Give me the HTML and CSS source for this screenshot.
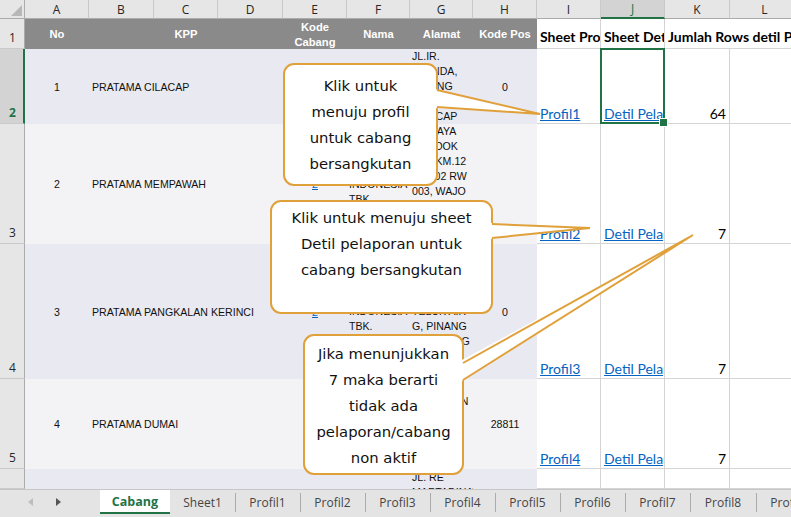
FILE: index.html
```html
<!DOCTYPE html>
<html lang="id">
<head>
<meta charset="utf-8">
<title>Cabang</title>
<link rel="stylesheet" href="styles.css">
</head>
<body>
<div class="app">
  <div class="sheet">
    <!-- column letters -->
    <div class="corner"><svg width="24" height="18" viewBox="0 0 24 18"><polygon points="11,16 22,16 22,5" fill="#b7b7b7"/></svg></div>
    <div class="ch">A</div>
    <div class="ch">B</div>
    <div class="ch">C</div>
    <div class="ch">D</div>
    <div class="ch">E</div>
    <div class="ch">F</div>
    <div class="ch">G</div>
    <div class="ch">H</div>
    <div class="ch">I</div>
    <div class="ch sel">J</div>
    <div class="ch">K</div>
    <div class="ch">L</div>

    <!-- row 1 -->
    <div class="rh">1</div>
    <div class="th">No</div>
    <div class="th span3">KPP</div>
    <div class="th two">Kode<br>Cabang</div>
    <div class="th">Nama</div>
    <div class="th">Alamat</div>
    <div class="th">Kode Pos</div>
    <div class="hd">Sheet Profil</div>
    <div class="hd">Sheet Detil Pelaporan</div>
    <div class="hd over">Jumlah Rows detil Pelaporan</div>
    <div class="hd last"></div>

    <!-- row 2 -->
    <div class="rh sel">2</div>
    <div class="td b1 num">1</div>
    <div class="td b1 kpp span3">PRATAMA CILACAP</div>
    <div class="td b1 num"><span class="lk">1</span></div>
    <div class="td b1 txt"><div>PT BANK</div><div>INDONESIA</div><div>TBK.</div></div>
    <div class="td b1 txt"><div>JL.IR.</div><div>JUANDA,</div><div>SIDANG</div><div>NO.1</div><div>CILACAP</div></div>
    <div class="td b1 num">0</div>
    <div class="cell"><span class="hl">Profil1</span></div>
    <div class="cell selcell"><span class="clip"><span class="hl">Detil Pelaporan</span></span></div>
    <div class="cell numr">64</div>
    <div class="cell"></div>

    <!-- row 3 -->
    <div class="rh">3</div>
    <div class="td b2 num">2</div>
    <div class="td b2 kpp span3">PRATAMA MEMPAWAH</div>
    <div class="td b2 num"><span class="lk">2</span></div>
    <div class="td b2 txt"><div>PT BANK</div><div>INDONESIA</div><div>TBK.</div></div>
    <div class="td b2 txt"><div>JL. RAYA</div><div>PONDOK</div><div>PTK KM.12</div><div>RT 002 RW</div><div>003, WAJO</div><div>HILIR</div><div>MEMPAWAH</div><div>&nbsp;</div></div>
    <div class="td b2 num"></div>
    <div class="cell"><span class="hl">Profil2</span></div>
    <div class="cell"><span class="clip"><span class="hl">Detil Pelaporan</span></span></div>
    <div class="cell numr">7</div>
    <div class="cell"></div>

    <!-- row 4 -->
    <div class="rh">4</div>
    <div class="td b1 num">3</div>
    <div class="td b1 kpp span3">PRATAMA PANGKALAN KERINCI</div>
    <div class="td b1 num"><span class="lk">2</span></div>
    <div class="td b1 txt"><div>PT BANK</div><div>INDONESIA</div><div>TBK.</div></div>
    <div class="td b1 txt"><div>JL. LINTAS</div><div>TIMUR KM.</div><div>PANGKALAN</div><div>KERINCI</div><div>TELUK AIR</div><div>G, PINANG</div><div>SELERANG</div><div>RIAU</div><div>&nbsp;</div></div>
    <div class="td b1 num">0</div>
    <div class="cell"><span class="hl">Profil3</span></div>
    <div class="cell"><span class="clip"><span class="hl">Detil Pelaporan</span></span></div>
    <div class="cell numr">7</div>
    <div class="cell"></div>

    <!-- row 5 -->
    <div class="rh">5</div>
    <div class="td b2 num">4</div>
    <div class="td b2 kpp span3">PRATAMA DUMAI</div>
    <div class="td b2 num"><span class="lk">1</span></div>
    <div class="td b2 txt"><div>PT BANK</div><div>INDONESIA</div><div>TBK.</div></div>
    <div class="td b2 txt"><div>JL. JEND.</div><div>SUDIRMAN</div><div>NO. 8</div><div>DUMAI</div><div>RIAU</div><div>&nbsp;</div></div>
    <div class="td b2 num">28811</div>
    <div class="cell"><span class="hl">Profil4</span></div>
    <div class="cell"><span class="clip"><span class="hl">Detil Pelaporan</span></span></div>
    <div class="cell numr">7</div>
    <div class="cell"></div>

    <!-- row 6 -->
    <div class="rh"></div>
    <div class="td b1"></div>
    <div class="td b1 span3"></div>
    <div class="td b1"></div>
    <div class="td b1"></div>
    <div class="td b1 txt top"><div>JL. RE</div><div>MARTADINATA</div></div>
    <div class="td b1"></div>
    <div class="cell"></div>
    <div class="cell"></div>
    <div class="cell"></div>
    <div class="cell"></div>
  </div>

  <div class="tabs">
    <div class="nav">
      <svg width="5" height="8" viewBox="0 0 5 8"><polygon points="5,0 5,8 0,4" fill="#bdbdbd"/></svg>
      <svg width="5" height="8" viewBox="0 0 5 8"><polygon points="0,0 0,8 5,4" fill="#555"/></svg>
    </div>
    <div class="tab active">Cabang</div>
    <div class="tab">Sheet1</div>
    <div class="tab sep">Profil1</div>
    <div class="tab sep">Profil2</div>
    <div class="tab sep">Profil3</div>
    <div class="tab sep">Profil4</div>
    <div class="tab sep">Profil5</div>
    <div class="tab sep">Profil6</div>
    <div class="tab sep">Profil7</div>
    <div class="tab sep wide">Profil8</div>
    <div class="tab sep">Profil9</div>
  </div>

  <div class="callout c1">Klik untuk<br>menuju profil<br>untuk cabang<br>bersangkutan</div>
  <div class="callout c2">Klik untuk menuju sheet<br>Detil pelaporan untuk<br>cabang bersangkutan</div>
  <div class="callout c3">Jika menunjukkan<br>7 maka berarti<br>tidak ada<br>pelaporan/cabang<br>non aktif</div>

  <svg class="tails" width="791" height="517" viewBox="0 0 791 517">
    <polygon points="434,89 540,114 434,108" fill="#fff"/>
    <polyline points="437,90 540,114 437,107" fill="none" stroke="#e0a03a" stroke-width="2"/>
    <polygon points="489,223 590,228 489,239" fill="#fff"/>
    <polyline points="492,224 590,228 492,238" fill="none" stroke="#e0a03a" stroke-width="2"/>
    <polygon points="460,361 693,235 460,382" fill="#fff"/>
    <polyline points="463,363 693,235 463,380" fill="none" stroke="#e0a03a" stroke-width="2"/>
  </svg>
</div>
</body>
</html>
```

FILE: styles.css
```css
* { box-sizing: border-box; margin: 0; padding: 0; }
html, body { width: 791px; height: 517px; overflow: hidden; background: #fff; }
body { font-family: "Liberation Sans", Arial, sans-serif; }

.app {
  position: relative;
  width: 791px;
  height: 517px;
  display: flex;
  flex-direction: column;
  overflow: hidden;
}

.sheet {
  flex: 0 0 489px;
  width: 791px;
  display: grid;
  grid-template-columns: 25px 64px 65px 64px 65px 64px 63px 63px 64px 64px 64px 65px 70px;
  grid-template-rows: 19px 30px 75px 120px 135px 90px 20px;
  overflow: hidden;
  background: #fff;
}

/* column letters */
.corner {
  background: #e6e6e6;
  border-right: 1px solid #ababab;
  border-bottom: 1px solid #ababab;
}
.corner svg { display: block; }
.ch {
  background: #e6e6e6;
  border-right: 1px solid #c9c9c9;
  border-bottom: 1px solid #ababab;
  display: flex;
  align-items: center;
  justify-content: center;
  font-family: "Open Sans", sans-serif;
  font-size: 12px;
  color: #262626;
}
.ch.sel {
  background: #d3d3d3;
  color: #217346;
  border-bottom: 2px solid #217346;
}

/* row numbers */
.rh {
  background: #e6e6e6;
  border-right: 1px solid #ababab;
  border-bottom: 1px solid #c9c9c9;
  display: flex;
  align-items: flex-end;
  padding: 0 0 2px 9px;
  font-family: "Open Sans", sans-serif;
  font-size: 12px;
  color: #262626;
}
.rh.sel {
  background: #d3d3d3;
  color: #217346;
  font-weight: 700;
  border-right: 2px solid #217346;
}

/* table header */
.th {
  background: #8a8a8a;
  color: #fff;
  font-weight: 700;
  font-size: 11.2px;
  line-height: 14px;
  text-align: center;
  display: flex;
  align-items: center;
  justify-content: center;
}
.th.two { padding-top: 2px; line-height: 15px; }
.span3 { grid-column: span 3; }

.hd {
  background: #fff;
  border-right: 1px solid #d4d4d4;
  border-bottom: 1px solid #d4d4d4;
  display: flex;
  align-items: flex-end;
  padding: 0 0 3px 3px;
  font-family: Lato, "Open Sans", sans-serif;
  font-weight: 700;
  font-size: 14px;
  color: #000;
  white-space: nowrap;
  overflow: hidden;
}
.hd.over { overflow: visible; border-right: none; position: relative; z-index: 1; }
.hd.last { background: transparent; border-right: none; }

/* table body */
.td {
  font-size: 10.6px;
  color: #111;
  display: flex;
  align-items: center;
}
.b1 { background: #e9e9f2; }
.b2 { background: #f3f3f5; }
.num { justify-content: center; }
.kpp { padding-left: 3px; white-space: nowrap; }
.txt {
  flex-direction: column;
  justify-content: center;
  align-items: flex-start;
  padding-left: 2px;
  line-height: 15px;
  white-space: nowrap;
}
.txt.top { justify-content: flex-start; padding-top: 1px; }
.lk { color: #0563c1; text-decoration: underline; }

/* plain grid cells */
.cell {
  background: #fff;
  border-right: 1px solid #d4d4d4;
  border-bottom: 1px solid #d4d4d4;
  display: flex;
  align-items: flex-end;
  padding: 0 0 1px 3px;
  font-family: Lato, "Open Sans", sans-serif;
  font-size: 14px;
  color: #000;
  white-space: nowrap;
  overflow: hidden;
}
.numr { justify-content: flex-end; padding-right: 3px; }
.hl { color: #0563c1; text-decoration: underline; }
.clip { display: block; overflow: hidden; width: 100%; }

.selcell { overflow: visible; position: relative; z-index: 2; }
.selcell::after {
  content: "";
  position: absolute;
  left: -1px; top: -1px; right: -1px; bottom: -1px;
  border: 2px solid #217346;
}
.selcell::before {
  content: "";
  position: absolute;
  right: -4px; bottom: -4px;
  width: 7px; height: 7px;
  background: #217346;
  border: 1px solid #fff;
  z-index: 1;
}

/* sheet tabs */
.tabs {
  flex: 0 0 28px;
  display: flex;
  align-items: flex-start;
  background: #e4e4e4;
  border-top: 1px solid #c6c6c6;
  font-family: "Open Sans", sans-serif;
  font-size: 12px;
  color: #444;
  overflow: hidden;
  white-space: nowrap;
}
.nav {
  flex: 0 0 100px;
  height: 24px;
  display: flex;
  align-items: center;
  gap: 23px;
  padding-left: 28px;
}
.nav svg { display: block; }
.tab {
  flex: 0 0 65px;
  height: 24px;
  display: flex;
  align-items: center;
  justify-content: center;
}
.tab.wide { flex-basis: 66px; }
.tab.sep {
  background: linear-gradient(#ababab, #ababab) left center / 1px 19px no-repeat;
}
.tab.active {
  flex-basis: 70px;
  background: #fff;
  color: #217346;
  font-weight: 700;
  font-size: 12.5px;
  border-bottom: 2px solid #217346;
}

/* callouts */
.callout {
  position: absolute;
  background: #fff;
  border: 2px solid #e0a03a;
  border-radius: 11px;
  font-family: "DejaVu Sans", sans-serif;
  font-size: 14.8px;
  line-height: 26px;
  text-align: center;
  color: #111;
  white-space: nowrap;
  z-index: 5;
}
.c1 { left: 283px; top: 63px; width: 155px; height: 123px; padding-top: 8px; }
.c2 { left: 270px; top: 200px; width: 223px; height: 114px; padding-top: 3px; }
.c3 { left: 303px; top: 334px; width: 161px; height: 141px; padding-top: 5px; }

.tails {
  position: absolute;
  left: 0;
  top: 0;
  z-index: 6;
  pointer-events: none;
}
```
